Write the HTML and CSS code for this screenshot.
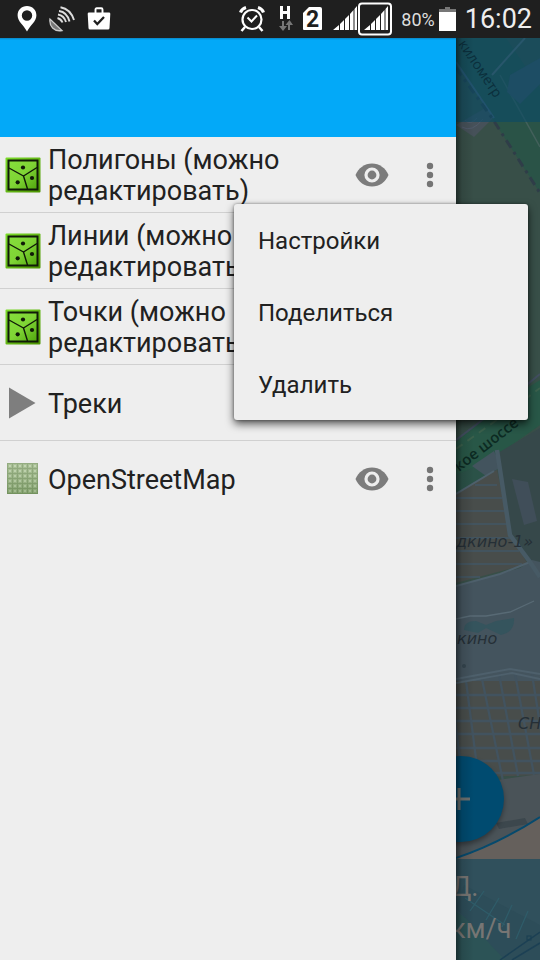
FILE: index.html
```html
<!DOCTYPE html>
<html lang="ru">
<head>
<meta charset="utf-8">
<meta name="viewport" content="width=device-width, initial-scale=1">
<title>Слои карты</title>
<link rel="stylesheet" href="styles.css">
</head>
<body>
<svg class="defs" aria-hidden="true">
  <defs>
    <linearGradient id="frame" x1="0" y1="0" x2="1" y2="1">
      <stop offset="0" stop-color="#7ddd2b"/><stop offset="1" stop-color="#4b9300"/>
    </linearGradient>
    <linearGradient id="field" x1="0" y1="0" x2="1" y2="1">
      <stop offset="0" stop-color="#86df3c"/><stop offset=".5" stop-color="#7fd435"/><stop offset="1" stop-color="#4fa50c"/>
    </linearGradient>
    <pattern id="weave" width="5" height="5" patternUnits="userSpaceOnUse">
      <rect width="5" height="5" fill="#819e6b"/>
      <rect width="4" height="4" fill="#9bb584"/>
      <rect x="1" y="1" width="2" height="2" fill="#b9cfa6"/>
    </pattern>
    <linearGradient id="weave-shade" x1="0" y1="0" x2="0" y2="1">
      <stop offset="0" stop-color="#fff" stop-opacity=".15"/><stop offset="1" stop-color="#456a35" stop-opacity=".25"/>
    </linearGradient>
    <symbol id="layer" viewBox="0 0 36 36">
      <rect x=".5" y=".5" width="35" height="35" rx="1" fill="url(#frame)"/>
      <rect x="3.500" y="3.500" width="29" height="29" fill="url(#field)" stroke="#101a08" stroke-width="2"/>
      <path d="M4 11 18.500 19 32 10.500M18.500 19 22.500 32" fill="none" stroke="#101a08" stroke-width="1.400"/>
      <circle cx="18" cy="10.500" r="2.100" fill="#101a08"/>
      <circle cx="27" cy="21" r="2.100" fill="#101a08"/>
      <circle cx="12.700" cy="25.300" r="2.100" fill="#101a08"/>
    </symbol>
    <symbol id="eye" viewBox="0 0 34 24">
      <path d="M.5 12C3.500 5 9.500.5 17 .5S30.500 5 33.500 12C30.500 19 24.500 23.500 17 23.500S3.500 19 .5 12z" fill="#7c7c7c"/>
      <circle cx="17" cy="12" r="6" fill="#7c7c7c" stroke="#eee" stroke-width="3.200"/>
    </symbol>
    <symbol id="dots" viewBox="0 0 8 26">
      <circle cx="4" cy="4" r="3.200"/><circle cx="4" cy="13" r="3.200"/><circle cx="4" cy="22" r="3.200"/>
    </symbol>
  </defs>
</svg>

<header class="status">
  <div class="status-left">
    <svg width="20" height="26" viewBox="0 0 20 26"><path fill="#fff" fill-rule="evenodd" d="M10 0C4.500 0 .6 4 .6 9.300.6 15.500 6.500 19 10 25.500 13.500 19 19.400 15.500 19.400 9.300 19.400 4 15.500 0 10 0zM10 4.300a5.200 5.200 0 1 1 0 10.400 5.200 5.200 0 0 1 0-10.400z"/></svg>
    <svg width="26" height="26" viewBox="0 0 26 26"><path d="M1 13C0 20 5 26 13 24.500z" fill="#777" stroke="#ccc" stroke-width="1.300"/><g fill="none" stroke="#ddd" stroke-width="1.900"><path d="M8.500 12Q12 13 13.500 16.500M9 8.500Q15 9.500 17 16M10 5Q18 6 20.500 15.500M11.500 1.200Q21.500 3 25 14"/></g></svg>
    <svg width="24" height="24" viewBox="0 0 24 24"><path d="M8.500 6V2.500Q8.500 1.300 9.700 1.300h4.600q1.200 0 1.200 1.200V6" fill="none" stroke="#fff" stroke-width="1.900"/><path d="M2 5.500h20q1.300 0 1.300 1.300L22.500 21q0 1.500-1.500 1.500H3q-1.500 0-1.500-1.500L.7 6.800Q.7 5.500 2 5.500z" fill="#fff"/><path d="m7 13.500 3.300 3.500 6.700-7" fill="none" stroke="#1f1f1f" stroke-width="2.300"/></svg>
  </div>
  <div class="status-right">
    <svg width="26" height="26" viewBox="0 0 26 26" fill="none" stroke="#fff"><circle cx="13" cy="13.500" r="9.500" stroke-width="2.200"/><path d="M1.500 6.500Q2.500 3 7 1.500M24.500 6.500Q23.500 3 19 1.500" stroke-width="3"/><path d="m6 21-3.500 4M20 21l3.500 4" stroke-width="2.500"/><path d="m8.500 11.500 4 4 5.500-6" stroke-width="2"/></svg>
    <svg class="after-alarm" width="14" height="26" viewBox="0 0 14 26"><path d="M2.500 0v13M9.500 0v13M2.500 6.500h7" stroke="#fff" stroke-width="3" fill="none"/><path d="M3 15v5H0l4 5 4-5H5v-5zM9 24v-5H6.500L10.500 14l3.500 5h-3v5z" fill="#777"/></svg>
    <svg class="after-data" width="20" height="24" viewBox="0 0 20 24"><path d="M6 0h11q2 0 2 2v20q0 1-1 1H1q-1 0-1-1V6z" fill="#fff"/><text class="sim" x="9.500" y="20">2</text></svg>
    <svg class="after-sim" width="60" height="34" viewBox="0 0 60 34"><g fill="#fff"><path d="M0 28 6 23v5zM7 22l4-4v10H7zM12 17l4-4v15h-4zM17 12l3.500-4v20H17zM21.500 7 24 4v24h-2.500z"/><path d="M31 28 37 23v5zM38 22l4-4v10h-4zM43 17l4-4v15h-4zM48 12l3.500-4v20H48zM52.500 7 55 4v24h-2.500z"/></g><rect x="26" y="1.500" width="32" height="31" rx="3" fill="none" stroke="#fff" stroke-width="2"/></svg>
    <span class="charge">80%</span>
    <svg width="18" height="24" viewBox="0 0 18 24"><path d="M6 0h5v2h6v5H0V2h6z" fill="#777"/><path d="M0 5h17v19H0z" fill="#fff"/></svg>
    <time class="clock">16:02</time>
  </div>
</header>

<main class="screen">
  <nav class="drawer" aria-label="Слои">
    <div class="banner"></div>
    <ul class="layers">
      <li class="layer">
        <svg class="thumb" width="36" height="36"><use href="#layer"/></svg>
        <span class="name">Полигоны (можно редактировать)</span>
        <button class="tool" aria-label="Видимость"><svg width="34" height="24"><use href="#eye"/></svg></button>
        <button class="tool" aria-label="Ещё"><svg width="8" height="26"><use href="#dots"/></svg></button>
      </li>
      <li class="layer">
        <svg class="thumb" width="36" height="36"><use href="#layer"/></svg>
        <span class="name">Линии (можно редактировать)</span>
        <button class="tool" aria-label="Видимость"><svg width="34" height="24"><use href="#eye"/></svg></button>
        <button class="tool" aria-label="Ещё"><svg width="8" height="26"><use href="#dots"/></svg></button>
      </li>
      <li class="layer">
        <svg class="thumb" width="36" height="36"><use href="#layer"/></svg>
        <span class="name">Точки (можно редактировать)</span>
        <button class="tool" aria-label="Видимость"><svg width="34" height="24"><use href="#eye"/></svg></button>
        <button class="tool" aria-label="Ещё"><svg width="8" height="26"><use href="#dots"/></svg></button>
      </li>
      <li class="layer">
        <svg class="thumb" width="36" height="36" viewBox="0 0 36 36"><path d="M4 2.500 30.500 18 4 33.500z" fill="#7e7e7e"/></svg>
        <span class="name">Треки</span>
        <button class="tool" aria-label="Видимость"><svg width="34" height="24"><use href="#eye"/></svg></button>
        <button class="tool" aria-label="Ещё"><svg width="8" height="26"><use href="#dots"/></svg></button>
      </li>
      <li class="layer">
        <svg class="thumb" width="36" height="36" viewBox="-3 -3 36 36"><rect x="-1" y="-1" width="31" height="31" fill="url(#weave)"/><rect x="-1" y="-1" width="31" height="31" fill="url(#weave-shade)"/></svg>
        <span class="name">OpenStreetMap</span>
        <button class="tool" aria-label="Видимость"><svg width="34" height="24"><use href="#eye"/></svg></button>
        <button class="tool" aria-label="Ещё"><svg width="8" height="26"><use href="#dots"/></svg></button>
      </li>
    </ul>
  </nav>

  <section class="map" aria-label="Карта">
    <svg class="tiles" viewBox="456 38 84 922" preserveAspectRatio="xMinYMin slice">
      <rect x="456" y="38" width="400" height="922" fill="#384f48"/>
      <path d="M456 38h50l34 50v105L456 62z" fill="#2a5347"/>
      <path d="M456 125 487 107 493 118 474 137z" fill="#465159"/>
      <path d="M462 127q10 6 21-8M465 120q5 6 12-2" fill="none" stroke="#505a6a"/>
      <path d="M456 62 494 118" stroke="#48607a" stroke-width="2"/>
      <path d="M456 68 492 118 540 193" fill="none" stroke="#2f3d48" stroke-width="3" stroke-dasharray="9 5 3 5"/>
      <path d="M500 75 540 147" stroke="#43605b" stroke-width="1.500"/>
      <rect x="456" y="38" width="400" height="84" fill="#0a4a66" fill-opacity=".62"/>
      <path d="M540 58 510 75 507 92 520 104 540 84z" fill="#1d4d64"/>
      <path d="M525 38 492 75" stroke="#28566b" stroke-width="2"/>
      <text class="road" transform="translate(458 44) rotate(56)">километр</text>

      <path d="M456 442 500 405 540 380V425L456 485z" fill="#285747"/>
      <path d="M456 440 506 402 540 374" fill="none" stroke="#424e60" stroke-width="2"/>
      <path d="M456 449 515 407 540 388" fill="none" stroke="#3b604c" stroke-width="2" stroke-dasharray="8 6"/>
      <path d="M498 453 540 428V570L512 540z" fill="#36484a"/>
      <path d="M456 494 497 469 510 535 528 564 456 583z" fill="#484d4b"/>
      <path d="M456 475 484 463 496 455 498 469 485 476 456 494z" fill="#2b5248"/>
      <path d="M472 466 494 451 501 467 486 476z" fill="#43545e"/>
      <path d="M475 485h22M456 498h46M456 511h50M456 524h53M456 538h56M456 551h63M456 564h66M456 577h24" stroke="#425766" stroke-width="1.300"/>
      <path d="M512 479 528 482 537 521 524 525z" fill="#404e59"/>
      <path d="M456 586 520 568 532 560 540 562V681H456z" fill="#44545e"/>
      <path d="M456 494 494 471M456 586 500 574 530 562" stroke="#4e606c" stroke-width="2" fill="none"/>
      <path d="M497 450 510 535 530 562 540 577" fill="none" stroke="#475a65" stroke-width="4.500"/>
      <path d="M456 619 470 616H486L510 612 534 601" fill="none" stroke="#586a75" stroke-width="1.300"/>
      <path d="M464 630Q464 621 476 621L486 625 496 621 514 618Q515 632 501 635L486 628 478 633z" fill="#35545d"/>
      <circle cx="464" cy="666" r="2" fill="#35454f"/>
      <text class="highway" transform="translate(459 472) rotate(-38)">кое шоссе</text>
      <text class="place" x="456" y="547">дкино-1»</text>
      <text class="place" x="457" y="644">кино</text>

      <path d="M456 681H540V775L456 778z" fill="#484d4b"/>
      <path d="M456 695h84M456 708h84M456 721h84M456 734h84M456 748h84M456 761h84M456 773h84M466 681 480 790M482 679 503 781M499 674 518 776M515 674 534 775M532 674 548 775M450 681 460 760" stroke="#42535f" stroke-width="2.300" fill="none"/>
      <path d="M456 679 510 669 540 674M456 683 512 673 540 679" stroke="#4e606c" stroke-width="1.800" fill="none"/>
      <path d="M456 786 540 774V860H456z" fill="#4a5358"/>
      <path d="M496 823 525 818 528 824 499 829z" fill="#3c474d"/>
      <text class="place" x="518" y="729">СН</text>
      <path d="M456 858Q498 844 540 817V860H456z" fill="#65605c"/>
      <path d="M456 858Q498 844 540 817" fill="none" stroke="#064a6d" stroke-width="2"/>

      <rect x="456" y="859" width="400" height="101" fill="#30505c"/>
      <path d="M456 912 484 928 540 970H456z" fill="#2c5356"/>
      <path d="M464 885 540 925V960H505L456 908z" fill="#2d4d59"/>
      <path d="M470 911 484 891M486 920 499 898M502 927 512 905M516 939 528 911M465 898 505 925" stroke="#2f5c69" stroke-width="1.300" fill="none"/>
      <path d="M500 960 540 932M512 960 540 943" stroke="#1c4054" stroke-width="1.500"/>
      <rect x="527" y="936" width="4" height="4" fill="none" stroke="#183f52"/>
    </svg>
    <button class="add" aria-label="Добавить"><svg width="22" height="22" viewBox="0 0 22 22"><path d="M11 0v22M0 11h22" stroke="#6c706f" stroke-width="3"/></svg></button>
    <div class="readout"><span>Д.</span><span>км/ч</span></div>
    <div class="edge"></div>
  </section>

  <div class="menu" role="menu">
    <button class="item" role="menuitem">Настройки</button>
    <button class="item" role="menuitem">Поделиться</button>
    <button class="item" role="menuitem">Удалить</button>
  </div>
</main>
</body>
</html>
```
FILE: styles.css
```css
* {
  box-sizing: border-box;
}

body {
  margin: 0;
  min-height: 100vh;
  display: flex;
  flex-direction: column;
  background: #eee;
  color: #212121;
  font-family: Roboto, "Liberation Sans", sans-serif;
}

button {
  margin: 0;
  padding: 0;
  border: 0;
  background: none;
  color: inherit;
  font: inherit;
}

svg {
  display: block;
  flex: none;
}

.defs {
  position: absolute;
  width: 0;
  height: 0;
}

.status {
  display: flex;
  justify-content: space-between;
  height: 38px;
  padding: 0 8px 0 17px;
  background: #1f1f1f;
  color: #fff;
}

.status-left,
.status-right {
  display: flex;
  align-items: center;
}

.status-left {
  gap: 12px;
}

.after-alarm {
  margin-left: 14px;
}

.after-data {
  margin-left: 10px;
}

.after-sim {
  margin-left: 10px;
}

.sim {
  font-size: 23px;
  font-weight: 700;
  text-anchor: middle;
  fill: #1f1f1f;
}

.charge {
  margin: 0 4px 0 8px;
  color: #ddd;
  font-size: 18px;
}

.clock {
  margin-left: 8px;
  color: #eee;
  font-size: 27px;
}

.screen {
  position: relative;
  flex: 1;
  display: grid;
  grid-template-columns: 1fr 84px;
}

.drawer {
  background: #eee;
}

.banner {
  height: 99px;
  background: linear-gradient(#0a86c4, #03a9f8 2px);
}

.layers {
  margin: 0;
  padding: 0;
  list-style: none;
}

.layer {
  display: flex;
  align-items: center;
  height: 76px;
  padding-left: 5px;
  border-bottom: 1px solid #d0d0d0;
}

.layer:last-child {
  border-bottom-color: transparent;
}

.name {
  flex: 1;
  padding: 3px 0 0 7px;
  font-size: 27px;
  line-height: 31px;
}

.tool {
  display: grid;
  place-items: center;
  width: 64px;
  height: 64px;
  fill: #757575;
}

.tool:last-child {
  width: 52px;
}

.map {
  position: relative;
  overflow: hidden;
  background: #384f48;
}

.tiles {
  position: absolute;
  width: 100%;
  height: 100%;
}

.road {
  font: 14px "Open Sans", sans-serif;
  fill: #0b2f3c;
}

.highway {
  font: 600 15px "Open Sans", sans-serif;
  fill: #0c2a22;
}

.place {
  font: italic 16px "DejaVu Sans", sans-serif;
  fill: #252f36;
}

.add {
  position: absolute;
  left: -38px;
  bottom: 118px;
  display: grid;
  place-items: center;
  width: 86px;
  height: 86px;
  border-radius: 50%;
  background: #004b70;
  box-shadow: 0 3px 5px rgba(0, 0, 0, .35);
}

.add svg {
  margin-right: 4px;
}

.readout {
  position: absolute;
  left: -5px;
  bottom: 10px;
  display: flex;
  flex-direction: column;
  color: #777674;
  font-size: 27px;
  line-height: 42px;
}

.edge {
  position: absolute;
  inset: 0;
  background: linear-gradient(to right, rgba(0, 0, 0, .45), rgba(0, 0, 0, .12) 6px, transparent 18px);
  pointer-events: none;
}

.menu {
  position: absolute;
  top: 166px;
  right: 12px;
  width: 294px;
  border-radius: 3px;
  background: #eee;
  box-shadow: 0 4px 8px rgba(0, 0, 0, .65), 0 0 3px rgba(0, 0, 0, .4);
}

.item {
  display: block;
  width: 100%;
  height: 72px;
  padding: 2px 0 0 24px;
  font-size: 24px;
  text-align: left;
}
```
